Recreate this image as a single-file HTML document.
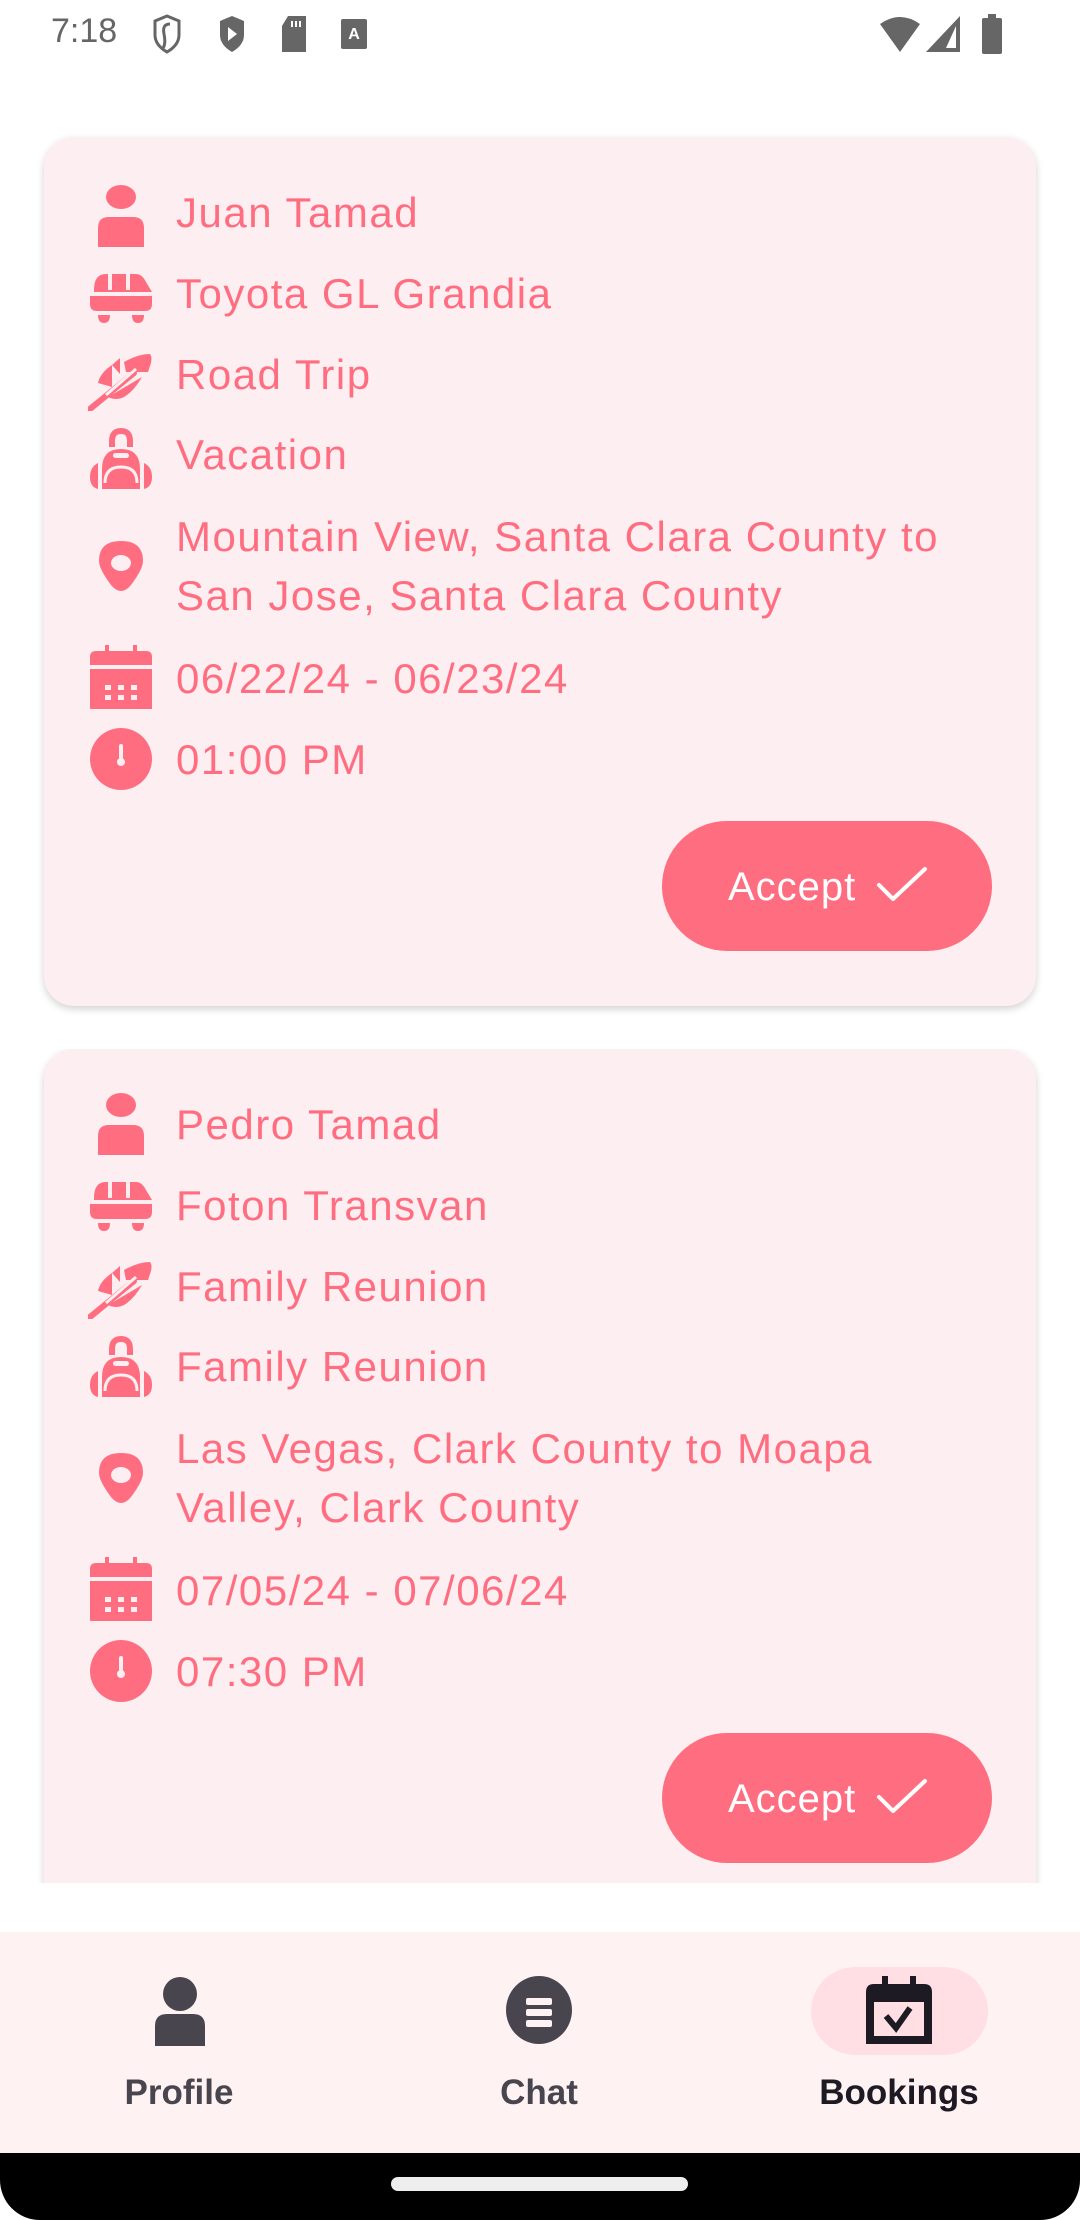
<!DOCTYPE html>
<html><head><meta charset="utf-8"><style>
*{margin:0;padding:0;box-sizing:border-box}
body{width:1080px;height:2220px;background:#fff;position:relative;overflow:hidden;font-family:"Liberation Sans",sans-serif}
.sb{position:absolute;top:0;left:0;width:1080px;height:63px;color:#666}
.card{position:absolute;left:44px;width:992px;background:#fdeef1;border-radius:30px;box-shadow:0 3px 8px rgba(0,0,0,.18)}
.row{position:absolute;left:44px;display:flex;align-items:center}
.ic{width:66px;height:66px;flex:none}
.t{position:absolute;left:132px;color:#ff6d80;font-size:42px;letter-spacing:1.5px;line-height:59px;white-space:nowrap}
.btn{position:absolute;left:618px;width:330px;height:130px;border-radius:65px;background:#ff6d80;color:#fff;font-size:40px;letter-spacing:1px}
.btn span{position:absolute;left:66px;top:44px}
.btn svg{position:absolute;left:214px;top:45px}
.nav{position:absolute;top:1932px;left:0;width:1080px;height:221px;background:#fff2f3}
.lbl{position:absolute;top:141px;font-size:35px;font-weight:bold;color:#48454e;width:200px;text-align:center}
</style></head><body>
<svg width="0" height="0" style="position:absolute">
<defs>
<symbol id="user" viewBox="0 0 66 66"><ellipse cx="33" cy="14" rx="15" ry="12" fill="#ff6d80"/><path d="M10 64V45q0-11 11-11h24q11 0 11 11v19z" fill="#ff6d80"/></symbol>
<symbol id="van" viewBox="0 0 66 66"><path d="M6 26q0-16 12-16h30q6 0 10 8l6 10H6z M20 12v14M40 12v14" fill="#ff6d80"/><rect x="20" y="10" width="4" height="16" fill="#fdeef1"/><rect x="38" y="10" width="4" height="16" fill="#fdeef1"/><path d="M2 32h62v8q0 7-7 7H9q-7 0-7-7z" fill="#ff6d80"/><path d="M10 51h12q0 8-6 8t-6-8zM44 51h12q0 8-6 8t-6-8z" fill="#ff6d80"/></symbol>
<symbol id="leaf" viewBox="0 0 66 66"><path d="M24 20l8-7v16zM36 17q14-8 26-8 3 4 0 12l-2 6H38zM54 32q-8 14-18 20-8 4-16 0z M10 38q2-10 14-18v22z" fill="#ff6d80"/><path d="M2 64L46 28" stroke="#ff6d80" stroke-width="6" stroke-linecap="round"/><path d="M18 50L48 24" stroke="#fdeef1" stroke-width="3"/></symbol>
<symbol id="bag" viewBox="0 0 66 66"><path d="M24 22v-6q0-10 9-10t9 10v6" stroke="#ff6d80" stroke-width="6" fill="none"/><path d="M14 44q0-20 19-20t19 20v20H14z" fill="#ff6d80"/><rect x="25" y="28" width="16" height="5" rx="2.5" fill="#fdeef1"/><path d="M17 58q0-16 16-16t16 16" stroke="#fdeef1" stroke-width="3" fill="none"/><path d="M10 38q-8 4-8 14t8 12zM56 38q8 4 8 14t-8 12z" fill="#ff6d80"/></symbol>
<symbol id="pin" viewBox="0 0 66 66"><path d="M33 8q22 0 22 20 0 8-12 24-5 6-10 6t-10-6Q11 36 11 28 11 8 33 8z" fill="#ff6d80"/><ellipse cx="33" cy="30" rx="10" ry="8" fill="#fdeef1"/></symbol>
<symbol id="cal" viewBox="0 0 66 66"><path d="M2 12q0-6 6-6h50q6 0 6 6v8H2z M17 0h4v8h-4zM45 0h4v8h-4z" fill="#ff6d80"/><rect x="2" y="24" width="62" height="40" fill="#ff6d80"/><g fill="#fdeef1"><rect x="17" y="40" width="6" height="5"/><rect x="30" y="40" width="6" height="5"/><rect x="43" y="40" width="6" height="5"/><rect x="17" y="50" width="6" height="5"/><rect x="30" y="50" width="6" height="5"/><rect x="43" y="50" width="6" height="5"/></g></symbol>
<symbol id="clock" viewBox="0 0 66 66"><ellipse cx="33" cy="33" rx="31" ry="31" fill="#ff6d80"/><path d="M33 20v14" stroke="#fdeef1" stroke-width="4" stroke-linecap="round"/><circle cx="33" cy="36" r="4" fill="#fdeef1"/></symbol>
</defs></svg>

<div class="sb">
<div style="position:absolute;left:51px;top:12px;font-size:34px;color:#666">7:18</div>
<svg style="position:absolute;left:152px;top:14px" width="30" height="40" viewBox="0 0 30 40"><path d="M15 2l12 5v14q0 10-12 17Q3 31 3 21V7z" fill="none" stroke="#666" stroke-width="3"/><path d="M18 10q-8 0-6 10t-1 14" stroke="#666" stroke-width="3" fill="none"/></svg>
<svg style="position:absolute;left:217px;top:14px" width="30" height="40" viewBox="0 0 30 40"><path d="M15 2l12 5v14q0 10-12 17Q3 31 3 21V7z" fill="#666"/><path d="M11 13l9 7-9 7z" fill="#fff"/></svg>
<svg style="position:absolute;left:280px;top:16px" width="28" height="36" viewBox="0 0 28 36"><path d="M8 0h18v36H2V10z" fill="#666"/><path d="M12 5v6M16 5v6M20 5v6" stroke="#fff" stroke-width="2"/></svg>
<svg style="position:absolute;left:341px;top:19px" width="26" height="30" viewBox="0 0 26 30"><rect width="26" height="30" rx="2" fill="#666"/><text x="13" y="20" font-size="16" font-weight="bold" fill="#fff" text-anchor="middle" font-family="Liberation Sans">A</text></svg>
<svg style="position:absolute;left:880px;top:16px" width="40" height="36" viewBox="0 0 40 36"><path d="M0 8Q20-6 40 8L20 36z" fill="#666"/></svg>
<svg style="position:absolute;left:926px;top:16px" width="36" height="36" viewBox="0 0 36 36"><path d="M34 0v36H0z" fill="#666"/><path d="M30 10v22h-10z" fill="#fff"/></svg>
<svg style="position:absolute;left:980px;top:14px" width="24" height="40" viewBox="0 0 24 40"><rect x="8" y="0" width="8" height="5" fill="#666"/><rect x="2" y="4" width="20" height="36" rx="2" fill="#666"/></svg>
</div>

<div class="card" style="top:137px;height:869px">
 <div class="row" style="top:46px"><svg class="ic"><use href="#user"/></svg></div><div class="t" style="top:46px">Juan Tamad</div>
 <div class="row" style="top:127px"><svg class="ic"><use href="#van"/></svg></div><div class="t" style="top:127px">Toyota GL Grandia</div>
 <div class="row" style="top:208px"><svg class="ic"><use href="#leaf"/></svg></div><div class="t" style="top:208px">Road Trip</div>
 <div class="row" style="top:288px"><svg class="ic"><use href="#bag"/></svg></div><div class="t" style="top:288px">Vacation</div>
 <div class="row" style="top:396px"><svg class="ic"><use href="#pin"/></svg></div><div class="t" style="top:370px">Mountain View, Santa Clara County to<br>San Jose, Santa Clara County</div>
 <div class="row" style="top:508px"><svg class="ic"><use href="#cal"/></svg></div><div class="t" style="top:512px">06/22/24 - 06/23/24</div>
 <div class="row" style="top:589px"><svg class="ic"><use href="#clock"/></svg></div><div class="t" style="top:593px">01:00 PM</div>
 <div class="btn" style="top:684px"><span>Accept</span><svg width="52" height="36" viewBox="0 0 52 36"><path d="M3 19l14 14L49 3" stroke="#fff" stroke-width="4" fill="none" stroke-linecap="round" stroke-linejoin="round"/></svg></div>
</div>

<div style="position:absolute;top:1049px;left:0;width:1080px;height:834px;overflow:hidden">
<div class="card" style="top:0;height:900px">
 <div class="row" style="top:42px"><svg class="ic"><use href="#user"/></svg></div><div class="t" style="top:46px">Pedro Tamad</div>
 <div class="row" style="top:123px"><svg class="ic"><use href="#van"/></svg></div><div class="t" style="top:127px">Foton Transvan</div>
 <div class="row" style="top:204px"><svg class="ic"><use href="#leaf"/></svg></div><div class="t" style="top:208px">Family Reunion</div>
 <div class="row" style="top:284px"><svg class="ic"><use href="#bag"/></svg></div><div class="t" style="top:288px">Family Reunion</div>
 <div class="row" style="top:396px"><svg class="ic"><use href="#pin"/></svg></div><div class="t" style="top:370px">Las Vegas, Clark County to Moapa<br>Valley, Clark County</div>
 <div class="row" style="top:508px"><svg class="ic"><use href="#cal"/></svg></div><div class="t" style="top:512px">07/05/24 - 07/06/24</div>
 <div class="row" style="top:589px"><svg class="ic"><use href="#clock"/></svg></div><div class="t" style="top:593px">07:30 PM</div>
 <div class="btn" style="top:684px"><span>Accept</span><svg width="52" height="36" viewBox="0 0 52 36"><path d="M3 19l14 14L49 3" stroke="#fff" stroke-width="4" fill="none" stroke-linecap="round" stroke-linejoin="round"/></svg></div>
</div></div>

<div class="nav">
 <svg style="position:absolute;left:153px;top:44px" width="54" height="70" viewBox="0 0 54 70"><ellipse cx="27" cy="18" rx="17" ry="17" fill="#48454e"/><path d="M2 70V50q0-12 12-12h26q12 0 12 12v20z" fill="#48454e"/></svg>
 <div class="lbl" style="left:79px">Profile</div>
 <svg style="position:absolute;left:506px;top:44px" width="66" height="68" viewBox="0 0 66 68"><ellipse cx="33" cy="34" rx="33" ry="34" fill="#48454e"/><rect x="20" y="22" width="26" height="7" rx="2" fill="#fff2f3"/><rect x="20" y="33" width="26" height="7" rx="2" fill="#fff2f3"/><rect x="20" y="44" width="26" height="7" rx="2" fill="#fff2f3"/></svg>
 <div class="lbl" style="left:439px">Chat</div>
 <div style="position:absolute;left:811px;top:35px;width:177px;height:88px;border-radius:44px;background:#ffdfe3"></div>
 <svg style="position:absolute;left:866px;top:44px" width="66" height="68" viewBox="0 0 66 68"><rect x="16" y="0" width="6" height="10" fill="#1d1a24"/><rect x="44" y="0" width="6" height="10" fill="#1d1a24"/><path d="M0 16q0-8 8-8h50q8 0 8 8v52H0z" fill="#1d1a24"/><rect x="8" y="26" width="50" height="34" fill="#ffdfe3"/><path d="M20 40l10 12 14-20" stroke="#1d1a24" stroke-width="6" fill="none"/></svg>
 <div class="lbl" style="left:799px;color:#1d1a24">Bookings</div>
</div>
<div style="position:absolute;top:2153px;left:0;width:1080px;height:67px;background:#000;border-radius:0 0 40px 40px"></div>
<div style="position:absolute;top:2177px;left:391px;width:297px;height:14px;border-radius:7px;background:#eee"></div>
</body></html>
